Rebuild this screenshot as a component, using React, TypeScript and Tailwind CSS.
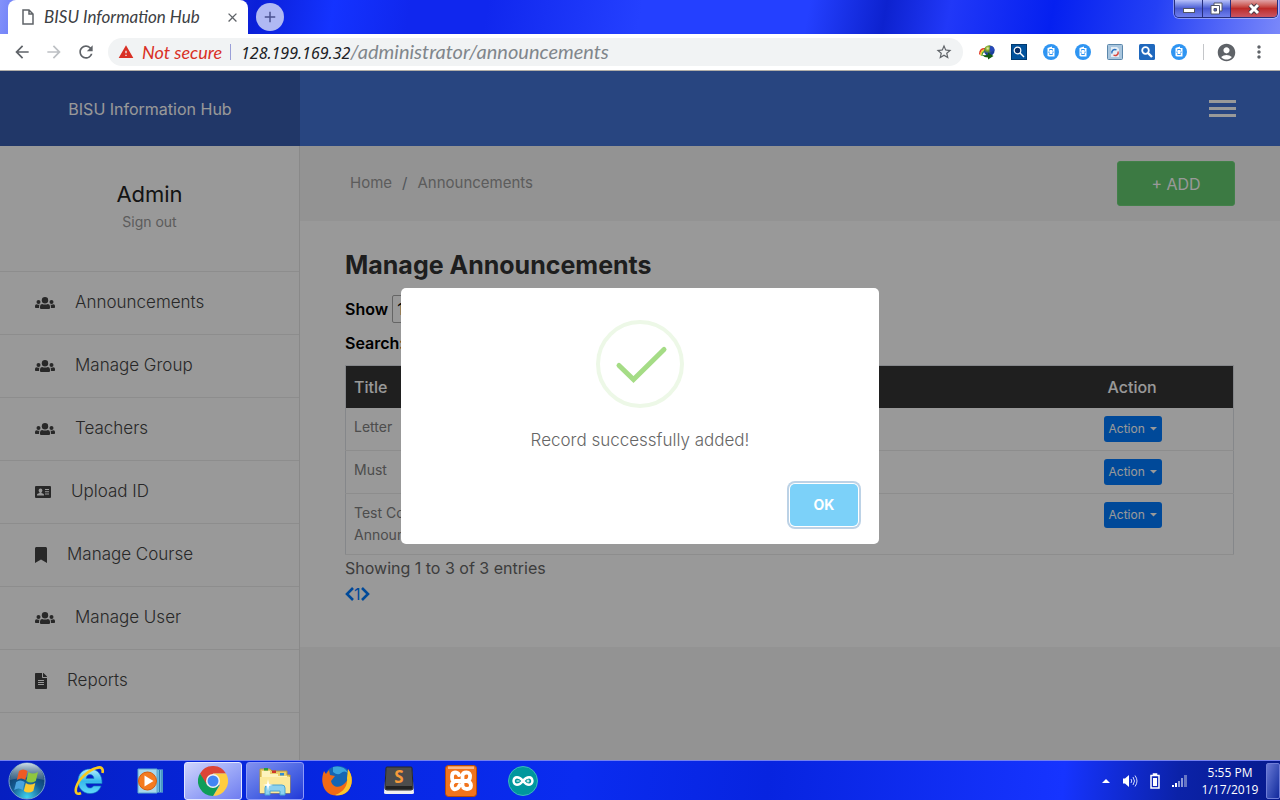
import type { ReactNode } from 'react';
import { FaBookmark, FaFileAlt } from 'react-icons/fa';
import { MdArrowBack, MdArrowForward, MdRefresh, MdStarBorder, MdWarning, MdAccountCircle, MdMoreVert, MdClose, MdAdd } from 'react-icons/md';

function Users() {
  return (
    <svg viewBox="0 0 20 12" className="h-3 w-5" fill="currentColor">
      <circle cx="10" cy="3.200" r="3.200" />
      <circle cx="3.500" cy="5" r="2" />
      <circle cx="16.500" cy="5" r="2" />
      <path d="M7 7q3 1.200 6 0 2 .3 2 2.500V11q0 1-1 1H6q-1 0-1-1V9.500Q5 7.300 7 7Z" />
      <path d="M0 9q0-1.700 1.500-1.700 1.800.8 3 .1Q4 8.500 4.100 11H.8Q0 11 0 10.200ZM20 9q0-1.700-1.500-1.700-1.800.8-3 .1.500 1.100.4 3.600h3.300q.8 0 .8-.8Z" />
    </svg>
  );
}

const menu = [
  { label: 'Announcements', icon: <Users /> },
  { label: 'Manage Group', icon: <Users /> },
  { label: 'Teachers', icon: <Users /> },
  { label: 'Upload ID', icon: <svg viewBox="0 0 16 12" className="h-3 w-4"><path fill="currentColor" d="M1 0h14q1 0 1 1v10q0 1-1 1H1q-1 0-1-1V1q0-1 1-1Z" /><path fill="#fff" d="M5.500 2.500a1.900 1.900 0 0 1 1.900 1.900c0 .8-.4 1.500-1 2V7l2 .8q.6.300.6 1.200v.5H2V9q0-.9.6-1.200L4.600 7v-.6c-.6-.5-1-1.200-1-2a1.900 1.900 0 0 1 1.900-1.900ZM10 3h4v1h-4zM10 5.300h4v1h-4zM10 7.600h4v1h-4z" /></svg> },
  { label: 'Manage Course', icon: <FaBookmark size={16} className="w-3" preserveAspectRatio="none" /> },
  { label: 'Manage User', icon: <Users /> },
  { label: 'Reports', icon: <FaFileAlt size={16} className="w-3" /> },
];

const rows = ['Letter', 'Must', 'Test College Announcement'];

function Finder() {
  return (
    <svg viewBox="0 0 16 16" className="size-4">
      <circle cx="8" cy="8" r="8" fill="#2f95f2" />
      <path d="M4.500 4 9 2.500V4h2.500v8.500H6L4.500 12Z" fill="#fff" />
      <path d="M6.500 6.500v-1h3v1M6.500 9.500v1h3v-1" fill="none" stroke="#2f95f2" />
      <path d="M6 7.500v1.500M10 7.500v1.500" stroke="#2f95f2" />
    </svg>
  );
}

function Magnifier({ dark = false }: { dark?: boolean }) {
  return (
    <svg viewBox="0 0 16 16" className="size-4">
      <rect width="16" height="16" rx={dark ? 0 : 1.5} fill={dark ? '#02529c' : '#1f68bd'} />
      {dark && <rect x=".5" y=".5" width="15" height="15" fill="none" stroke="#013a70" />}
      <circle cx="6.500" cy="6.500" r="3.300" fill={dark ? '#0b2f66' : 'none'} stroke="#fff" strokeWidth={dark ? 1.2 : 1.8} />
      <path d="m9 9 4 4" stroke="#fff" strokeWidth={dark ? 1.5 : 2.4} />
    </svg>
  );
}

function Globe() {
  return (
    <svg viewBox="0 0 16 16" className="size-4">
      <defs>
        <radialGradient id="globe" cx=".35" cy=".3"><stop offset="0" stopColor="#e7f4b0" /><stop offset=".45" stopColor="#7aa51e" /><stop offset="1" stopColor="#1b3f9c" /></radialGradient>
      </defs>
      <path d="M.8 10.500C.5 6 3 4.500 6 4.800" fill="none" stroke="#e23a26" strokeWidth="1.500" />
      <path d="M2 11.500C1.500 8 3.500 6 6 6" fill="none" stroke="#f2c81b" strokeWidth="1.400" />
      <path d="M3 12C3 9 4 7.500 6.500 7.200" fill="none" stroke="#49a02c" strokeWidth="1.200" />
      <circle cx="10.300" cy="6.500" r="5.300" fill="url(#globe)" />
      <path d="M11 2q4 0 4.500 4-3 3-5 1Z" fill="#2748b8" />
      <path d="M3.500 11q4 .5 5.500-.5V8.500l5.500 3.500L9 15.500V13.500q-4 0-5.500-2.500Z" fill="#125c12" />
    </svg>
  );
}

function Sync() {
  return (
    <svg viewBox="0 0 16 16" className="size-4">
      <rect x=".5" y=".5" width="15" height="15" rx="1" fill="#a9c6de" stroke="#5b87ab" />
      <path d="M4 3h6l2 2v8H4z" fill="#e4edf5" />
      <path d="M5 9.500a3 3 0 0 1 4.500-3.500" fill="none" stroke="#2b72bf" strokeWidth="1.400" />
      <path d="M11 7.500A3 3 0 0 1 6.500 11" fill="none" stroke="#d9423a" strokeWidth="1.400" />
    </svg>
  );
}

function BrowserChrome() {
  return (
    <header className="shrink-0 font-['Lato',sans-serif] italic">
      <div className="flex h-[34px] items-start bg-[linear-gradient(100deg,#8392fa_0%,#5a6cf5_3%,#0a1fd8_20%,#1433ff_26%,#1027ee_32%,#1027ee_38%,#2440ff_50%,#2440ff_63%,#0d22cf_69%,#2138f8_74%,#0520f0_82%,#2440f5_90%,#7a88fa_100%)]">
        <div className="ml-2 flex h-[34px] w-60 items-center rounded-t-lg bg-white pr-2 pl-3">
          <svg viewBox="0 0 12 16" className="mr-2 h-4 w-4" fill="none" stroke="#5f6368" strokeWidth="1.500"><path d="M1 1h6l4 4v10H1ZM7 1v4h4" /></svg>
          <span className="flex-1 text-[17px] whitespace-nowrap text-[#3c4043]">BISU Information Hub</span>
          <button aria-label="Close tab" className="text-[#5f6368]"><MdClose size={15} /></button>
        </div>
        <button aria-label="New tab" className="mt-[3px] ml-2 flex size-7 items-center justify-center rounded-full bg-[#b0b9f3] text-[#4a5290]"><MdAdd size={18} /></button>
        <div className="mr-[2px] ml-auto flex h-[18px] overflow-hidden rounded-b-[5px] border border-t-0 border-[#262e7c] ring-1 ring-white/40">
          <button aria-label="Minimize" className="flex w-7 items-center justify-center border-r border-[#262e7c] bg-linear-to-b from-[#b9c1fa] via-[#4a59d2] to-[#7080ee]"><svg viewBox="0 0 12 5" className="mt-1 h-[5px] w-3"><rect x=".5" y=".5" width="11" height="4" fill="#fff" stroke="#535666" /></svg></button>
          <button aria-label="Restore" className="flex w-7 items-center justify-center border-r border-[#262e7c] bg-linear-to-b from-[#b9c1fa] via-[#4a59d2] to-[#7080ee]"><svg viewBox="0 0 13 13" className="size-[13px]"><path d="M4 1h8v8H4Z" fill="#fff" stroke="#535666" /><path d="M1 3.500h8.500V12H1Z" fill="#fff" stroke="#535666" /><path d="M4 6.500h2.500V9H4Z" fill="#4a59d2" stroke="#535666" /></svg></button>
          <button aria-label="Close" className="flex w-[46px] items-center justify-center bg-linear-to-b from-[#e0a3a8] via-[#bd2a28] to-[#c95563]"><svg viewBox="0 0 14 12" className="h-3 w-3.5"><path d="m3 2 8 8m0-8-8 8" stroke="#4c3b48" strokeWidth="5" /><path d="m3 2 8 8m0-8-8 8" stroke="#fff" strokeWidth="3" /></svg></button>
        </div>
      </div>
      <div className="flex h-[37px] items-center border-b border-[#b1aea9] bg-white pr-[11px] pl-3 text-[#5f6368]">
        <button aria-label="Back" className="mr-3"><MdArrowBack size={20} /></button>
        <button aria-label="Forward" className="mr-3 text-[#bdc0c4]"><MdArrowForward size={20} /></button>
        <button aria-label="Reload" className="mr-3"><MdRefresh size={20} /></button>
        <div className="flex h-7 flex-1 items-center rounded-full bg-[#f1f3f4] px-2.5">
          <MdWarning size={16} className="text-[#d93025]" />
          <span className="ml-2 w-[88px] text-[18px] whitespace-nowrap text-[#d93025]">Not secure</span>
          <span className="mr-2.5 h-4 w-px shrink-0 bg-[#9a9fd8]" />
          <div className="flex flex-1 items-baseline text-[20px] leading-7 text-[#80868b]"><span className="font-['Noto_Sans',sans-serif] text-[16px] text-[#202124]">128.199.169.32</span>/administrator/announcements</div>
          <MdStarBorder size={18} />
        </div>
        <div className="ml-4 flex items-center gap-4"><Globe /><Magnifier dark /><Finder /><Finder /><Sync /><Magnifier /><Finder /></div>
        <span className="ml-4 h-4 w-px bg-[#c4c6c9]" />
        <button aria-label="Profile" className="ml-3"><MdAccountCircle size={21} /></button>
        <button aria-label="Menu" className="ml-3"><MdMoreVert size={20} /></button>
      </div>
    </header>
  );
}

function ActionButton() {
  return (
    <button className="-ml-1 flex h-[26px] w-[58px] items-center justify-between rounded-[3px] bg-[#007bff] px-[5px] text-[12px] text-white">
      Action
      <svg viewBox="0 0 7 4" className="h-1 w-[7px]"><path d="M0 0h7L3.500 3.500Z" fill="#fff" /></svg>
    </button>
  );
}

function Dialog() {
  return (
    <div className="absolute inset-0 flex items-center justify-center bg-black/40">
      <div role="dialog" aria-modal="true" aria-labelledby="message" className="flex w-[478px] max-w-full flex-col items-center rounded-[5px] bg-white pt-8 pb-[18px] text-center">
        <svg viewBox="0 0 88 88" className="size-[88px]" fill="none">
          <circle cx="44" cy="44" r="42" stroke="#edf8e7" strokeWidth="4" />
          <path d="m23 45.500 14.500 14L68 29.500" stroke="#a5dc86" strokeWidth="5" strokeLinecap="round" />
        </svg>
        <p id="message" className="mt-5 text-[17px] leading-6 font-light text-[#666]">Record successfully added!</p>
        <div className="mt-8 flex w-full justify-end pr-[21px]">
          <button className="h-[42px] w-[68px] rounded-[5px] bg-[#7cd1f9] text-[14px] font-bold text-white ring-2 ring-[#bcd2e6] ring-offset-1">OK</button>
        </div>
      </div>
    </div>
  );
}

function Page() {
  return (
    <div className="relative flex flex-1 flex-col bg-[#f5f5f5] font-['Inter',sans-serif] text-[16px] text-[#555]">
      <header className="flex h-[75px] shrink-0 bg-[#4473d5] text-white">
        <div className="flex w-[300px] items-center justify-center bg-[#385cad]">BISU Information Hub</div>
        <button aria-label="Toggle navigation" className="mr-11 ml-auto flex w-[27px] flex-col justify-center gap-1">
          <span className="h-[3px] w-full bg-white" /><span className="h-[3px] w-full bg-white" /><span className="h-[3px] w-full bg-white" />
        </button>
      </header>
      <div className="flex flex-1">
        <aside className="w-[300px] shrink-0 border-r border-[#e5e5e5] bg-white">
          <div className="flex h-[126px] flex-col items-center border-b border-[#ebebeb] pt-[33px]">
            <h4 className="text-[22px] leading-[30px] text-[#222]">Admin</h4>
            <a href="#signout" className="text-[14px] leading-[26px] text-[#999]">Sign out</a>
          </div>
          <nav>
            {menu.map((item) => (
              <a key={item.label} href="#menu" className="flex h-[63px] items-center gap-5 border-b border-[#ebebeb] pb-px pl-[35px] text-[17px] font-light text-[#444]">
                {item.icon}{item.label}
              </a>
            ))}
          </nav>
        </aside>
        <main className="flex-1">
          <div className="flex h-[75px] items-center justify-between pr-[45px] pl-[50px]">
            <nav aria-label="Breadcrumb" className="flex gap-2.5 text-[15px] text-[#999]"><a href="#home">Home</a><span className="text-[#868e96]">/</span><span>Announcements</span></nav>
            <button className="h-[45px] w-[118px] rounded-[3px] border border-[#6fd67b] bg-[#64cb70] text-white">+ ADD</button>
          </div>
          <section className="bg-white pt-7 pr-[46px] pb-10 pl-[45px]">
            <h3 className="text-[25px] leading-8 font-bold text-[#333]">Manage Announcements</h3>
            <label className="mt-3.5 flex h-7 items-center gap-1 font-semibold text-black">Show
              <select className="h-7 w-14 rounded-[2px] border border-[#a9a9a9] bg-white font-normal"><option>10</option></select>
            </label>
            <label className="mt-1.5 flex h-7 items-center gap-1 font-semibold text-black">Search:
              <input className="h-7 w-48 border border-[#a9a9a9] bg-white" />
            </label>
            <table className="mt-2 w-full border-collapse border border-[#dee2e6] text-left">
              <thead className="bg-[#343434] text-white">
                <tr className="h-[42px]"><th className="w-[150px] px-2 font-medium">Title</th><th /><th className="w-[134px] px-2 font-medium">Action</th></tr>
              </thead>
              <tbody className="align-top text-[14px] leading-[22px] text-[#808080]">
                {rows.map((row) => (
                  <tr key={row} className="h-[43px] border-b border-[#ececec]">
                    <td className="px-2 py-2">{row}</td><td /><td className="px-2 py-2"><ActionButton /></td>
                  </tr>
                ))}
              </tbody>
            </table>
            <p className="leading-[26px] text-[#666]">Showing 1 to 3 of 3 entries</p>
            <div className="flex h-[26px] items-center text-[#007bff]">
              <button aria-label="Previous"><svg viewBox="0 0 9 14" className="h-3.5 w-[9px]" fill="none" stroke="currentColor" strokeWidth="2.600"><path d="M8 1 2 7l6 6" /></svg></button>
              <a href="#page">1</a>
              <button aria-label="Next"><svg viewBox="0 0 9 14" className="h-3.5 w-[9px]" fill="none" stroke="currentColor" strokeWidth="2.600"><path d="m1 1 6 6-6 6" /></svg></button>
            </div>
          </section>
        </main>
      </div>
      <Dialog />
    </div>
  );
}

function Task({ label, active = '', children }: { label: string; active?: string; children: ReactNode }) {
  return <button aria-label={label} className={`flex h-[38px] w-[58px] items-center justify-center rounded-[3px] ${active}`}>{children}</button>;
}

function Taskbar() {
  return (
    <footer className="flex h-10 shrink-0 items-center border-t border-[#7480f0] bg-[linear-gradient(95deg,#061fc0_0%,#0525dd_20%,#0a2cf0_45%,#0724e0_60%,#1634ff_83%,#0b22a8_92%,#061a8c_100%)] font-['Open_Sans',sans-serif] text-white">
      <button aria-label="Start" className="ml-2">
        <svg viewBox="0 0 38 38" className="size-[38px]">
          <defs>
            <radialGradient id="orb" cx=".5" cy=".95" r=".9"><stop offset="0" stopColor="#3fd4f0" /><stop offset=".5" stopColor="#145b93" /><stop offset="1" stopColor="#0a2b57" /></radialGradient>
            <linearGradient id="shine" x2="0" y2="1"><stop offset="0" stopColor="#cfe0e8" /><stop offset="1" stopColor="#5d7f96" stopOpacity=".5" /></linearGradient>
          </defs>
          <circle cx="19" cy="19" r="18" fill="url(#orb)" stroke="#7ba6c8" />
          <path d="M2 18a17 17 0 0 1 34 0q-17-5-34 0Z" fill="url(#shine)" />
          <path d="M11 9q4-3 8.500 0l-2.200 9q-4-3-8.500 0Z" fill="#ef5a24" />
          <path d="M20.500 10q4 3 9.500 0l-2.200 9q-5 3-9.500 0Z" fill="#8fc73e" />
          <path d="M8.200 20q4-3 8.500 0l-2 8q-4-3-8.500 0Z" fill="#4aa3e0" />
          <path d="M17.800 21q4 3 9.500 0l-2 8q-5 3-9.500 0Z" fill="#fdc930" />
        </svg>
      </button>
      <div className="ml-3.5 flex items-center gap-1">
        <Task label="Internet Explorer">
          <svg viewBox="0 0 32 32" className="size-8">
            <defs><linearGradient id="ie" x2="0" y2="1"><stop offset="0" stopColor="#b3efff" /><stop offset=".5" stopColor="#36b8ed" /><stop offset="1" stopColor="#63d8fa" /></linearGradient></defs>
            <path d="M17 4c-7.500 0-12 5.500-12 12s4.500 12.500 12 12.500c6 0 9.500-3 11-7.500h-7.500c-1 1.500-2 2-3.500 2-2.500 0-4-1.800-4.200-4.500H29C29.500 10 24.500 4 17 4Zm-4 9.500c.5-2.600 2-4 4-4s3.700 1.400 4 4Z" fill="url(#ie)" stroke="#137dbd" strokeWidth=".6" />
            <path d="M29.500 8c1-4-1-7-6-5C16 5 5 14 3 23c-1 5 1 7 5 5" fill="none" stroke="#f7c91f" strokeWidth="2.600" />
          </svg>
        </Task>
        <Task label="Media Player">
          <svg viewBox="0 0 28 26" className="h-[26px] w-7">
            <path d="M19 1.500h7v23h-7z" fill="#6db8dd" /><path d="M22.500 2v22M25 2v22" stroke="#2a78ad" /><path d="M1 1h19v24H1z" fill="#a7d7ec" stroke="#5ba8cf" />
            <circle cx="10.500" cy="13" r="9" fill="#f47b20" stroke="#d75d0c" /><path d="m7.500 7.500 9 5.500-9 5.500Z" fill="#fff" />
          </svg>
        </Task>
        <Task label="Chrome" active="border border-[#e2e6ff] bg-linear-to-br from-[#d0d4fb] to-[#6f7cf0]">
          <svg viewBox="0 0 30 30" className="size-[30px]">
            <path d="M2 7.500a15 15 0 0 1 26 0H15l-7.500 12Z" fill="#db4437" /><path d="M15 7.500h13A15 15 0 0 1 15 30l7-11Z" fill="#ffcd40" /><path d="M2 7.500A15 15 0 0 0 15 30l6.500-11-12 .5Z" fill="#0f9d58" />
            <circle cx="15" cy="15" r="7" fill="#f1f1f1" /><circle cx="15" cy="15" r="5.500" fill="#4285f4" />
          </svg>
        </Task>
        <Task label="Explorer" active="border border-[#8e9bf8] bg-linear-to-br from-[#8290ef] to-[#2237d8]">
          <svg viewBox="0 0 34 30" className="h-[30px] w-[34px]">
            <path d="M2 3h10l2 2h15v4h3v18H2Z" fill="#e9cf6d" stroke="#b99836" /><path d="M4 5h8v3h8v2h9v3H4Z" fill="#fdf3bd" />
            <path d="M6 2h4v2.500H6z" fill="#279b38" /><path d="M14 4.500h4V7h-4z" fill="#cf3826" /><path d="M22 7h4v2.500h-4z" fill="#318dd1" />
            <path d="M2 11h30v16H2z" fill="#fbe99b" /><path d="M7 29v-7q0-3 3-3h14q3 0 3 3v7h-5v-4H12v4Z" fill="#8dd1ef" stroke="#4aa4d2" />
            <path d="m10 13 1 5 4 1-4 1-1 5-1-5-4-1 4-1Z" fill="#fff" />
          </svg>
        </Task>
        <Task label="Firefox">
          <svg viewBox="0 0 32 32" className="size-8">
            <circle cx="17" cy="15" r="14" fill="#1465b3" /><path d="M12 2q11-2 15 6-4-3-7 0t-8-1Z" fill="#3aa3dd" />
            <path d="M27 4c5 7 5 16 0 22-6 6-17 6-22 0C1 21 0 13 3 6l2 3 3-4 1 5 5 1-4 5c1 5 6 7 10 5 6-3 9-9 7-17Z" fill="#f06a16" />
            <path d="M27 4c5 7 5 16 0 22-4 4-9 5-13 4 9-3 13-10 12-17Z" fill="#fbc62d" />
          </svg>
        </Task>
        <Task label="Sublime Text">
          <svg viewBox="0 0 32 30" className="h-[30px] w-8">
            <path d="M3 4h26l2 23q0 1-2 1H3q-2 0-2-1Z" fill="#f0f0f0" /><path d="M4 1h24q1 0 1 1l1 20q0 2-2 2H4q-2 0-2-2L3 2q0-1 1-1Z" fill="#4c4c4c" stroke="#262626" /><path d="M3 20h26v3H3Z" fill="#222" />
            <text x="16" y="17" textAnchor="middle" fontFamily="Open Sans" fontWeight="700" fontSize="17" fill="#f79a3b">S</text>
          </svg>
        </Task>
        <Task label="XAMPP">
          <svg viewBox="0 0 32 32" className="size-8">
            <rect x=".5" y=".5" width="31" height="31" rx="3" fill="#f1741c" stroke="#b54c08" /><path d="M3 1.500h26V4H3Z" fill="#f8b889" />
            <path d="M14 10q-1-2.500-4-2.500T7 12t3 4h5m-5 0q-4 2-3 5.500t4 2.500 3.500-4M17.500 21V11q0-3.500 4-3.500T25 12q0 3-3 4 4 1 4 4.500T22 24q-3.500 0-4.500-3M14 16h8" fill="none" stroke="#fff" strokeWidth="3.800" strokeLinecap="round" strokeLinejoin="round" />
          </svg>
        </Task>
        <Task label="Arduino">
          <svg viewBox="0 0 30 30" className="size-[30px]">
            <circle cx="15" cy="15" r="14.500" fill="#00979d" stroke="#3bbabb" /><path d="M15 15c-4-5-9-5-9.500 0 .5 5 5.500 5 9.500 0 4-5 9-5 9.500 0-.5 5-5.500 5-9.500 0Z" fill="none" stroke="#fff" strokeWidth="2.400" /><path d="M8.500 15h3m7 0h3m-1.500-1.500v3" stroke="#fff" />
          </svg>
        </Task>
      </div>
      <div className="ml-auto flex items-center gap-3">
        <svg viewBox="0 0 8 4" className="h-1 w-2"><path d="m0 4 4-4 4 4Z" fill="#fff" /></svg>
        <svg viewBox="0 0 16 14" className="h-3.5 w-4"><path d="M1 4.500h2L7 1v12L3 9.500H1Z" fill="#fff" /><path d="M9 5q1.500 2 0 4m2-6q3 4 0 8m2-9.500q4 5.500 0 11" fill="none" stroke="#d3dafa" /></svg>
        <svg viewBox="0 0 10 16" className="h-4 w-2.5"><path d="M1 2.500h8v12.500H1ZM3.500 1h3v1.500h-3Z" fill="none" stroke="#fff" strokeWidth="1.500" /><path d="M3 5h4v8H3z" fill="#fff" /></svg>
        <svg viewBox="0 0 16 12" className="h-3 w-4"><path d="M0 10h2v2H0zM3 8h2v4H3z" fill="#fff" /><path d="M6 6h2v6H6zM9 3h2v9H9z" fill="#8b98d8" /><path d="M12 0h3v12h-3z" fill="#6776c4" /></svg>
      </div>
      <div className="mr-1.5 ml-3 w-[60px] text-center text-[12px] leading-[17px] whitespace-nowrap"><div>5:55 PM</div><div>1/17/2019</div></div>
      <button aria-label="Show desktop" className="h-9 w-3.5 rounded-[2px] border border-[#6e7dd7] bg-linear-to-br from-[#6a78d4] to-[#12279c]" />
    </footer>
  );
}

export default function App() {
  return (
    <div className="flex min-h-screen flex-col">
      <BrowserChrome />
      <Page />
      <Taskbar />
    </div>
  );
}
